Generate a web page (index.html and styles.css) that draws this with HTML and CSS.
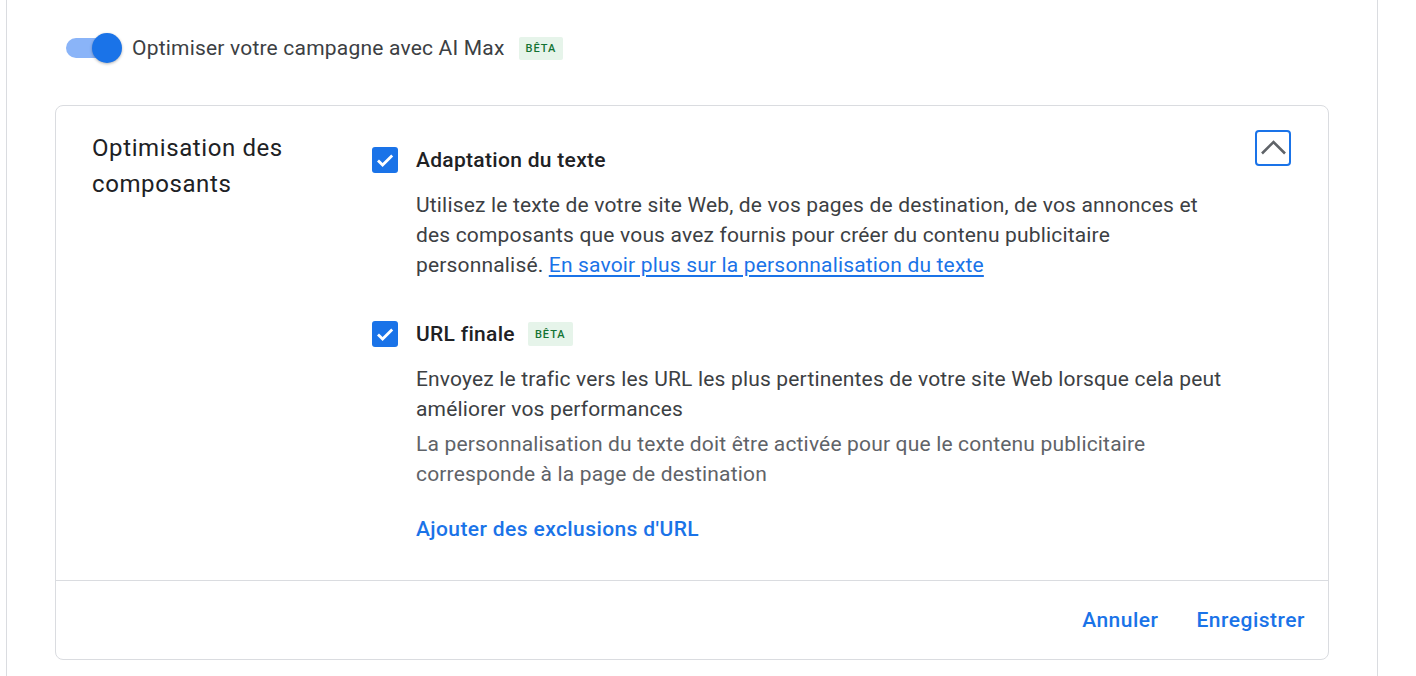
FILE: index.html
```html
<!DOCTYPE html>
<html lang="fr">
<head>
<meta charset="utf-8">
<link rel="stylesheet" href="styles.css">
</head>
<body>
<div class="page">
  <div class="toggle-row">
    <span class="toggle"><span class="track"></span><span class="knob"></span></span>
    <span class="toggle-label">Optimiser votre campagne avec AI Max</span>
    <span class="badge">BÊTA</span>
  </div>

  <section class="card">
    <div class="card-body">
      <h2 class="card-title">Optimisation des composants</h2>
      <div class="options">
        <div class="option">
          <div class="option-head">
            <span class="checkbox"><svg viewBox="0 0 26 26" width="26" height="26"><path d="M6 13.5l4.6 4.6 9.6-9.6" fill="none" stroke="#fff" stroke-width="2.8"/></svg></span>
            <span class="option-title">Adaptation du texte</span>
          </div>
          <div class="option-text">
            <p>Utilisez le texte de votre site Web, de vos pages de destination, de vos annonces et des composants que vous avez fournis pour créer du contenu publicitaire personnalisé. <a href="#" class="link">En savoir plus sur la personnalisation du texte</a></p>
          </div>
        </div>
        <div class="option second">
          <div class="option-head">
            <span class="checkbox"><svg viewBox="0 0 26 26" width="26" height="26"><path d="M6 13.5l4.6 4.6 9.6-9.6" fill="none" stroke="#fff" stroke-width="2.8"/></svg></span>
            <span class="option-title">URL finale</span>
            <span class="badge">BÊTA</span>
          </div>
          <div class="option-text">
            <p>Envoyez le trafic vers les URL les plus pertinentes de votre site Web lorsque cela peut améliorer vos performances</p>
            <p class="muted">La personnalisation du texte doit être activée pour que le contenu publicitaire corresponde à la page de destination</p>
            <a href="#" class="action">Ajouter des exclusions d'URL</a>
          </div>
        </div>
      </div>
      <button class="collapse" aria-label="Réduire">
        <svg viewBox="0 0 32 32" width="32" height="32"><path d="M5 21.5L16.5 10 28 21.5" fill="none" stroke="#5f6368" stroke-width="2.6"/></svg>
      </button>
    </div>
    <div class="card-footer">
      <a href="#" class="btn">Annuler</a>
      <a href="#" class="btn">Enregistrer</a>
    </div>
  </section>
</div>
</body>
</html>
```

FILE: styles.css
```css
* { box-sizing: border-box; }
html, body { margin: 0; padding: 0; background: #fff; }
body {
  font-family: Roboto, "Liberation Sans", Arial, sans-serif;
  color: #3c4043;
  height: 676px;
  overflow: hidden;
}
.page {
  margin-left: 6px;
  width: 1372px;
  height: 676px;
  border-left: 1px solid #dadce0;
  border-right: 1px solid #dadce0;
  padding: 33px 48px 0 48px;
}
.toggle-row {
  display: flex;
  align-items: center;
  height: 30px;
  padding-left: 11px;
}
.toggle {
  position: relative;
  width: 56px;
  height: 30px;
  flex: none;
}
.track {
  position: absolute;
  left: 0;
  top: 5px;
  width: 50px;
  height: 20px;
  border-radius: 10px;
  background: #8ab4f8;
}
.knob {
  position: absolute;
  right: 0;
  top: 0;
  width: 30px;
  height: 30px;
  border-radius: 50%;
  background: #1a73e8;
  box-shadow: 0 1px 3px rgba(0,0,0,0.3);
}
.toggle-label {
  margin-left: 10px;
  font-size: 21px;
  letter-spacing: 0.2px;
  color: #3c4043;
}
.badge {
  display: inline-flex;
  align-items: center;
  justify-content: center;
  height: 23px;
  padding: 0 7px;
  margin-left: 14px;
  background: #e6f4ea;
  color: #137333;
  font-size: 11px;
  font-weight: 500;
  letter-spacing: 1px;
  border-radius: 2px;
}
.card {
  margin-top: 42px;
  width: 1274px;
  border: 1px solid #dadce0;
  border-radius: 8px;
}
.card-body {
  display: flex;
  padding: 24px 37px 36px 36px;
  border-bottom: 1px solid #dadce0;
}
.card-title {
  margin: 0;
  width: 280px;
  flex: none;
  font-size: 24px;
  font-weight: 400;
  letter-spacing: 0.6px;
  line-height: 36px;
  color: #202124;
  padding-right: 60px;
}
.options {
  flex: 1;
  padding-top: 15px;
}
.option-head {
  display: flex;
  align-items: center;
  height: 30px;
}
.checkbox {
  width: 26px;
  height: 26px;
  border-radius: 3px;
  background: #1a73e8;
  display: inline-flex;
  flex: none;
}
.option-title {
  margin-left: 18px;
  font-size: 21px;
  font-weight: 500;
  letter-spacing: 0.3px;
  color: #202124;
}
.option-head .badge { margin-left: 13px; height: 24px; }
.option-text {
  padding-left: 44px;
  margin-top: 15px;
  width: 856px;
}
.option-text p {
  margin: 0;
  font-size: 21px;
  letter-spacing: 0.17px;
  line-height: 30px;
  color: #3c4043;
}
.option-text p.muted {
  margin-top: 5px;
  color: #5f6368;
}
.link { color: #1a73e8; text-decoration: underline; text-underline-offset: 3px; }
.second { margin-top: 39px; }
.action {
  display: block;
  margin-top: 25px;
  font-size: 21px;
  letter-spacing: 0.4px;
  line-height: 30px;
  font-weight: 500;
  color: #1a73e8;
  text-decoration: none;
}
.collapse {
  flex: none;
  width: 36px;
  height: 36px;
  border: 2px solid #1a73e8;
  border-radius: 4px;
  background: #fff;
  padding: 0;
  display: flex;
  align-items: center;
  justify-content: center;
  margin-left: 20px;
}
.card-footer {
  display: flex;
  justify-content: flex-end;
  align-items: center;
  gap: 38px;
  height: 78px;
  padding-right: 23px;
}
.btn {
  font-size: 21px;
  font-weight: 500;
  letter-spacing: 0.5px;
  color: #1a73e8;
  text-decoration: none;
}
```
